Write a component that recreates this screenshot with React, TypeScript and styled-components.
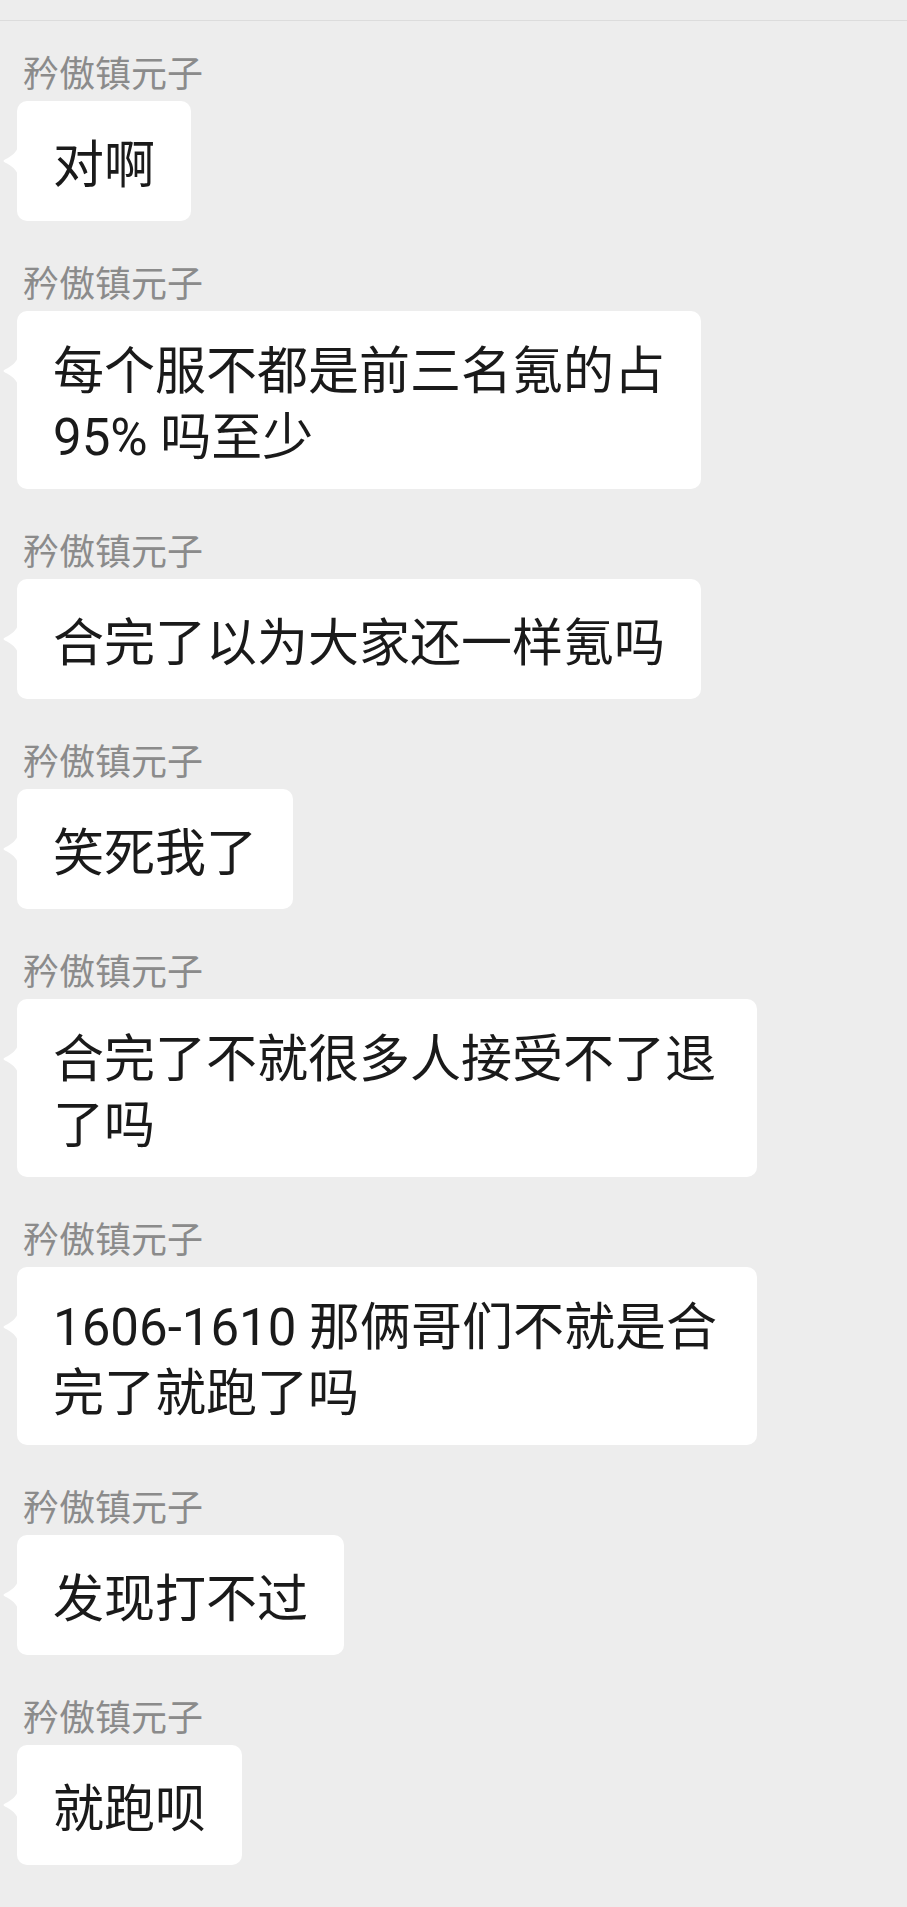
import React from 'react';
import styled, { createGlobalStyle } from 'styled-components';

const messages = [
  { lines: ['对啊'] },
  { lines: ['每个服不都是前三名氪的占', '95% 吗至少'] },
  { lines: ['合完了以为大家还一样氪吗'] },
  { lines: ['笑死我了'] },
  { lines: ['合完了不就很多人接受不了退', '了吗'], wide: true },
  { lines: ['1606-1610 那俩哥们不就是合', '完了就跑了吗'], wide: true },
  { lines: ['发现打不过'] },
  { lines: ['就跑呗'] },
];

const SENDER = '矜傲镇元子';

const Tail = () => (
  <TailSvg width="16" height="30" viewBox="0 0 16 30">
    <path d="M16 0 C15 6 10 10 3 13.5 Q0 15 3 16.5 C10 20 15 24 16 30 Z" fill="#ffffff" />
  </TailSvg>
);

const App = () => {
  return (
    <>
      <GlobalStyle />
      <Page>
        <TopBar />
        <MessageList>
          {messages.map((m, i) => (
            <Message key={i}>
              <Sender>{SENDER}</Sender>
              <Bubble $wide={m.wide}>
                <Tail />
                {m.lines.map((line, j) => (
                  <Line key={j}>{line}</Line>
                ))}
              </Bubble>
            </Message>
          ))}
        </MessageList>
      </Page>
    </>
  );
};

export default App;

const GlobalStyle = createGlobalStyle`
  html, body {
    margin: 0;
    padding: 0;
    background: #ededed;
  }
  body {
    font-family: Roboto, "Noto Sans CJK SC", sans-serif;
  }
`;

const Page = styled.div`
  min-height: 1907px;
  background: #ededed;
`;

const TopBar = styled.div`
  height: 20px;
  border-bottom: 1px solid #dcdcdc;
`;

const MessageList = styled.div`
  display: flex;
  flex-direction: column;
  align-items: flex-start;
  gap: 42px;
  padding: 32px 0 40px 17px;
`;

const Message = styled.div`
  display: flex;
  flex-direction: column;
  align-items: flex-start;
  gap: 4px;
`;

const Sender = styled.div`
  margin-left: 6px;
  font-size: 36px;
  line-height: 44px;
  color: #8b8b8b;
`;

const Bubble = styled.div<{ $wide?: boolean }>`
  position: relative;
  box-sizing: border-box;
  display: flex;
  flex-direction: column;
  justify-content: center;
  min-height: 120px;
  width: ${(p) => (p.$wide ? '740px' : 'auto')};
  padding: 28px 36px 18px 36px;
  background: #ffffff;
  border-radius: 10px;
  color: #1a1a1a;
  font-size: 51px;
  line-height: 66px;
`;

const TailSvg = styled.svg`
  position: absolute;
  left: -15px;
  top: 45px;
  display: block;
`;

const Line = styled.span`
  display: block;
  white-space: nowrap;
`;
